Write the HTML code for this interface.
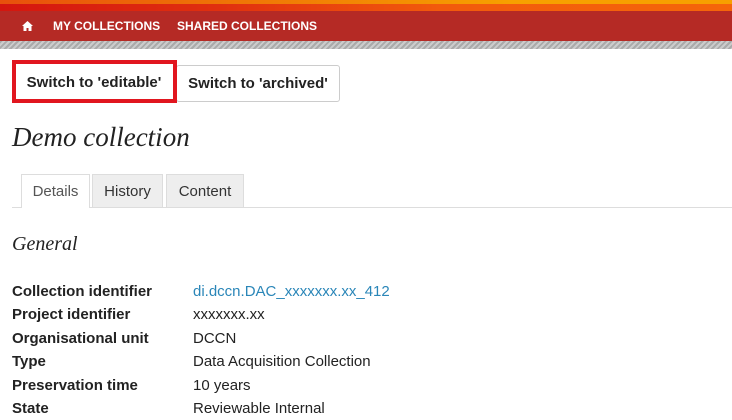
<!DOCTYPE html>
<html><head><meta charset="utf-8"><style>
body{margin:0;width:732px;height:420px;overflow:hidden;background:#fff;font-family:"Liberation Sans",sans-serif;color:#222;position:relative}
.top{position:absolute;left:0;top:0;width:732px;height:11px;background:linear-gradient(90deg,#d4160f 0%,#e0300f 30%,#f25a0c 60%,#f5660a 100%)}
.top:before{content:"";position:absolute;left:0;top:0;width:100%;height:4px;background:linear-gradient(90deg,#e8500c,#f7a000 70%,#f7a000)}
.nav{position:absolute;left:0;top:11px;width:732px;height:30px;background:#b52a25;color:#fff;font-weight:bold;font-size:12px}
.nav span{position:absolute;top:8px}
.hatch{position:absolute;left:0;top:41px;width:732px;height:8px;background:repeating-linear-gradient(135deg,#aaa 0 2px,#ccc 2px 4px)}
.btn{position:absolute;border:1px solid #ccc;border-radius:3px;background:#fff;font-size:15px;font-weight:bold;color:#222;text-align:center;box-sizing:border-box}
.red{position:absolute;left:12px;top:60px;width:165px;height:43px;border:4px solid #e1161f;box-sizing:border-box}
h1{position:absolute;left:12px;top:122px;margin:0;font:italic 27px "Liberation Serif",serif;color:#222}
.tab{position:absolute;top:174px;height:34px;box-sizing:border-box;border:1px solid #ddd;font-size:15px;color:#333;text-align:center;line-height:33px;background:#eee}
.line{position:absolute;left:12px;top:207px;width:720px;height:1px;background:#ddd}
h2{position:absolute;left:12px;top:233px;margin:0;font:italic 20px "Liberation Serif",serif;color:#222}
.r{position:absolute;left:12px;font-size:15px}
.r b{position:absolute;left:0;white-space:nowrap}
.r i{font-style:normal;position:absolute;left:181px;white-space:nowrap}
</style></head><body>
<div class="top"></div>
<div class="nav">
<svg style="position:absolute;left:22px;top:10px" width="11" height="10" viewBox="0 0 11 10"><path d="M5.5 0 L11 5 H9.5 V10 H6.5 V7 H4.5 V10 H1.5 V5 H0 Z" fill="#fff"/></svg>
<span style="left:53px">MY COLLECTIONS</span><span style="left:177px">SHARED COLLECTIONS</span></div>
<div class="hatch"></div>
<div class="btn" style="left:176px;top:65px;width:164px;height:37px;line-height:35px">Switch to 'archived'</div>
<div class="btn" style="left:14px;top:65px;width:160px;height:37px;line-height:35px;border:none">Switch to 'editable'</div>
<div class="red"></div>
<h1>Demo collection</h1>
<div class="tab" style="left:92px;width:71px">History</div>
<div class="tab" style="left:166px;width:78px">Content</div>
<div class="line"></div>
<div class="tab" style="left:21px;width:69px;background:#fff;border-bottom:none;color:#555;z-index:2">Details</div>
<h2>General</h2>
<div class="r" style="top:283px"><b>Collection identifier</b><i style="color:#2a86b8">di.dccn.DAC_xxxxxxx.xx_412</i></div>
<div class="r" style="top:306px"><b>Project identifier</b><i>xxxxxxx.xx</i></div>
<div class="r" style="top:330px"><b>Organisational unit</b><i>DCCN</i></div>
<div class="r" style="top:353px"><b>Type</b><i>Data Acquisition Collection</i></div>
<div class="r" style="top:377px"><b>Preservation time</b><i>10 years</i></div>
<div class="r" style="top:400px"><b>State</b><i>Reviewable Internal</i></div>
</body></html>
